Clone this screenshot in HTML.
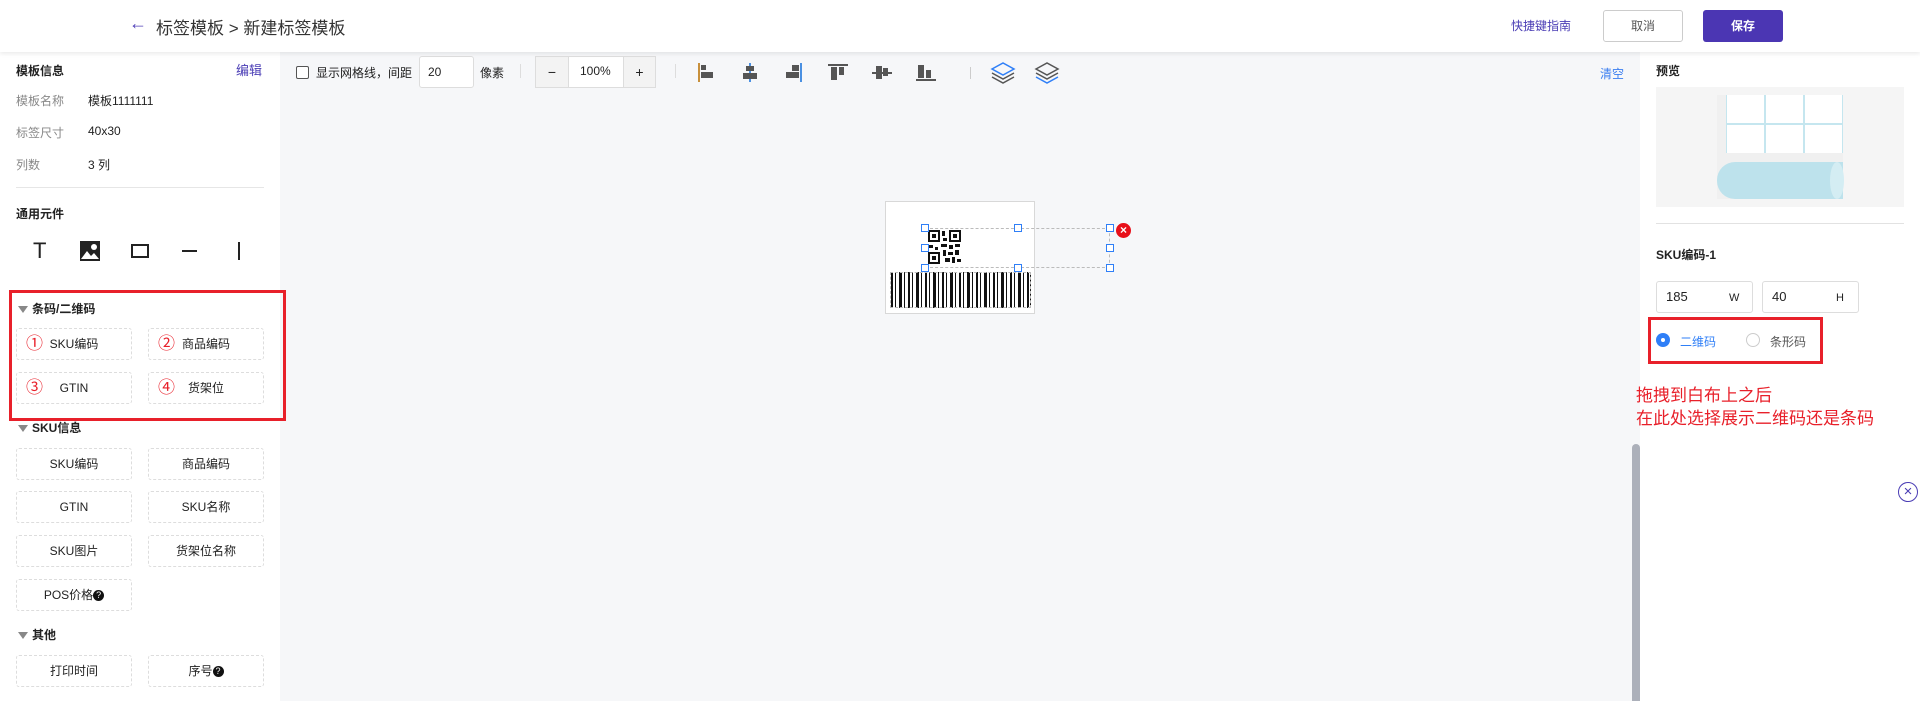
<!DOCTYPE html>
<html><head><meta charset="utf-8"><style>
*{margin:0;padding:0;box-sizing:border-box}
body{width:1920px;height:701px;overflow:hidden;background:#f6f7f9;font-family:"Liberation Sans","Noto Sans CJK SC",sans-serif;position:relative;color:#222}
.a{position:absolute}
.hdr{left:0;top:0;width:1920px;height:52px;background:#fff;box-shadow:0 2px 4px rgba(0,0,0,.08);z-index:2}
.lp{left:0;top:52px;width:280px;height:649px;background:#fff}
.rp{left:1640px;top:52px;width:280px;height:649px;background:#fff}
.t13{font-size:12px}
.b{font-weight:bold}
.btn{width:116px;height:32px;border:1px dashed #ddd;border-radius:3px;font-size:12px;text-align:center;line-height:30px;color:#222;background:#fff}
.btn .n{position:absolute;left:9px;top:0;color:#e8202a;font-size:17px;line-height:30px}
.tri{display:inline-block;width:0;height:0;border-left:5px solid transparent;border-right:5px solid transparent;border-top:7px solid #888;margin-right:4px;vertical-align:middle}
.h{width:8px;height:8px;border:1px solid #2f7ff7;background:#fff}
.q{display:inline-block;width:11px;height:11px;border-radius:50%;background:#111;color:#fff;font-size:9px;line-height:11px;text-align:center;vertical-align:middle}
</style></head><body>
<div class="a hdr">
 <div class="a" style="left:129px;top:13px;font-size:18px;color:#5040b8">&#8592;</div>
 <div class="a" style="left:156px;top:14px;font-size:17px;color:#333">标签模板 &gt; 新建标签模板</div>
 <div class="a" style="left:1511px;top:17px;font-size:12px;color:#4a3db5">快捷键指南</div>
 <div class="a" style="left:1603px;top:10px;width:80px;height:32px;border:1px solid #ccc;border-radius:3px;text-align:center;line-height:30px;font-size:12px;color:#555">取消</div>
 <div class="a" style="left:1703px;top:10px;width:80px;height:32px;background:#4b36b3;border-radius:3px;text-align:center;line-height:32px;font-size:12px;color:#fff;font-weight:bold">保存</div>
</div>
<div class="a lp">
 <div class="a t13 b" style="left:16px;top:10px">模板信息</div>
 <div class="a" style="left:236px;top:8px;font-size:13px;color:#4a3db5">编辑</div>
 <div class="a t13" style="left:16px;top:40px;color:#888">模板名称</div><div class="a t13" style="left:88px;top:40px">模板1111111</div>
 <div class="a t13" style="left:16px;top:72px;color:#888">标签尺寸</div><div class="a t13" style="left:88px;top:72px">40x30</div>
 <div class="a t13" style="left:16px;top:104px;color:#888">列数</div><div class="a t13" style="left:88px;top:104px">3 列</div>
 <div class="a" style="left:16px;top:135px;width:248px;height:1px;background:#e6e6e6"></div>
 <div class="a t13 b" style="left:16px;top:153px">通用元件</div>
 <div class="a" style="left:33px;top:188px;font-size:22px;line-height:22px;color:#222">T</div>
 <svg class="a" style="left:80px;top:189px" width="20" height="20"><rect width="20" height="20" fill="#222"/><circle cx="14" cy="6" r="3" fill="#fff"/><path d="M1 18 L7 10 L11 15 L14 12 L19 18Z" fill="#fff"/></svg>
 <div class="a" style="left:131px;top:192px;width:18px;height:14px;border:2px solid #222"></div>
 <div class="a" style="left:182px;top:198px;width:15px;height:2px;background:#222"></div>
 <div class="a" style="left:238px;top:190px;width:2px;height:18px;background:#222"></div>
 <div class="a" style="left:16px;top:238px;width:248px;height:1px;background:#e6e6e6"></div>
 <div class="a t13 b" style="left:18px;top:248px"><span class="tri"></span>条码/二维码</div>
 <div class="a btn" style="left:16px;top:276px"><span class="n">①</span>SKU编码</div>
 <div class="a btn" style="left:148px;top:276px"><span class="n">②</span>商品编码</div>
 <div class="a btn" style="left:16px;top:320px"><span class="n">③</span>GTIN</div>
 <div class="a btn" style="left:148px;top:320px"><span class="n">④</span>货架位</div>
 <div class="a t13 b" style="left:18px;top:367px"><span class="tri"></span>SKU信息</div>
 <div class="a btn" style="left:16px;top:396px">SKU编码</div>
 <div class="a btn" style="left:148px;top:396px">商品编码</div>
 <div class="a btn" style="left:16px;top:439px">GTIN</div>
 <div class="a btn" style="left:148px;top:439px">SKU名称</div>
 <div class="a btn" style="left:16px;top:483px">SKU图片</div>
 <div class="a btn" style="left:148px;top:483px">货架位名称</div>
 <div class="a btn" style="left:16px;top:527px">POS价格<span class="q">?</span></div>
 <div class="a t13 b" style="left:18px;top:574px"><span class="tri"></span>其他</div>
 <div class="a btn" style="left:16px;top:603px">打印时间</div>
 <div class="a btn" style="left:148px;top:603px">序号<span class="q">?</span></div>
</div>
<div class="a" style="left:9px;top:290px;width:277px;height:131px;border:3px solid #e8202a"></div>
<!-- toolbar -->
<div class="a" style="left:296px;top:66px;width:13px;height:13px;border:1px solid #555;border-radius:2px;background:#fff"></div>
<div class="a t13" style="left:316px;top:64px">显示网格线，间距</div>
<div class="a" style="left:419px;top:56px;width:55px;height:32px;border:1px solid #ddd;border-radius:3px;background:#fff;font-size:12px;line-height:30px;padding-left:8px">20</div>
<div class="a t13" style="left:480px;top:64px">像素</div>
<div class="a" style="left:520px;top:64px;width:1px;height:14px;background:#ddd"></div>
<div class="a" style="left:535px;top:56px;width:121px;height:32px;border:1px solid #ddd;border-radius:3px;background:#fff"></div>
<div class="a" style="left:535px;top:56px;width:34px;height:32px;background:#f3f3f3;border:1px solid #ddd;text-align:center;line-height:30px;font-size:14px">−</div>
<div class="a" style="left:623px;top:56px;width:33px;height:32px;background:#f3f3f3;border:1px solid #ddd;text-align:center;line-height:30px;font-size:14px">+</div>
<div class="a t13" style="left:580px;top:64px">100%</div>
<div class="a" style="left:675px;top:64px;width:1px;height:14px;background:#ddd"></div>
<svg class="a" style="left:680px;top:52px" width="400" height="40">
 <g fill="#555"><rect x="18" y="11" width="2" height="19" fill="#c8903c"/><rect x="21" y="13" width="5" height="5"/><rect x="21" y="20" width="12" height="6"/>
 <rect x="69" y="11" width="2" height="19" fill="#4a90e2"/><rect x="66" y="14" width="8" height="5"/><rect x="63" y="21" width="14" height="6"/>
 <rect x="120" y="11" width="2" height="19" fill="#4a90e2"/><rect x="112" y="13" width="7" height="6"/><rect x="106" y="20" width="13" height="6"/>
 <rect x="148" y="12" width="20" height="2"/><rect x="151" y="15" width="6" height="13"/><rect x="159" y="15" width="5" height="8"/>
 <rect x="192" y="20" width="20" height="2"/><rect x="196" y="14" width="6" height="13"/><rect x="203" y="16" width="5" height="8"/>
 <rect x="236" y="27" width="20" height="2"/><rect x="238" y="13" width="6" height="13"/><rect x="246" y="18" width="5" height="8"/>
 <rect x="290" y="15" width="1" height="12" fill="#ccc"/></g>
 <g fill="none" stroke-width="1.5"><path d="M312 17 L323 11 L334 17 L323 23Z" stroke="#2f7ff7"/><path d="M312 21 L323 27 L334 21" stroke="#555"/><path d="M312 25 L323 31 L334 25" stroke="#555"/>
 <path d="M356 17 L367 11 L378 17 L367 23Z" stroke="#555"/><path d="M356 21 L367 27 L378 21" stroke="#555"/><path d="M356 25 L367 31 L378 25" stroke="#2f7ff7"/></g>
</svg>
<div class="a t13" style="left:1600px;top:65px;color:#3b7ef0">清空</div>
<!-- canvas label -->
<div class="a" style="left:885px;top:201px;width:150px;height:113px;background:#fff;border:1px solid #d8d8d8"></div>
<div class="a" style="left:925px;top:228px;width:185px;height:40px;border:1px dashed #bbb;border-left:none"></div>
<svg class="a" style="left:925px;top:228px" width="40" height="40"><g fill="#111">
<rect x="3" y="2" width="12" height="12"/><rect x="5" y="4" width="8" height="8" fill="#fff"/><rect x="7" y="6" width="4" height="4"/>
<rect x="24" y="2" width="12" height="12"/><rect x="26" y="4" width="8" height="8" fill="#fff"/><rect x="28" y="6" width="4" height="4"/>
<rect x="3" y="24" width="12" height="12"/><rect x="5" y="26" width="8" height="8" fill="#fff"/><rect x="7" y="28" width="4" height="4"/>
<rect x="17" y="3" width="3" height="5"/><rect x="18" y="10" width="4" height="3"/><rect x="16" y="16" width="6" height="3"/><rect x="24" y="17" width="4" height="4"/><rect x="30" y="16" width="5" height="3"/><rect x="18" y="22" width="3" height="6"/><rect x="23" y="24" width="5" height="3"/><rect x="30" y="22" width="4" height="5"/><rect x="20" y="30" width="5" height="4"/><rect x="27" y="29" width="3" height="6"/><rect x="32" y="31" width="4" height="3"/><rect x="4" y="17" width="4" height="3"/><rect x="10" y="19" width="3" height="3"/></g></svg>
<div class="a" style="left:890px;top:272px;width:141px;height:36px;border:1px dashed #bbb;background:repeating-linear-gradient(90deg,#111 0 2px,#fff 2px 4px,#111 4px 5px,#fff 5px 8px,#111 8px 11px,#fff 11px 13px,#111 13px 14px,#fff 14px 17px)"></div>
<div class="a h" style="left:921px;top:224px"></div><div class="a h" style="left:1014px;top:224px"></div><div class="a h" style="left:1106px;top:224px"></div>
<div class="a h" style="left:921px;top:244px"></div><div class="a h" style="left:1106px;top:244px"></div>
<div class="a h" style="left:921px;top:264px"></div><div class="a h" style="left:1014px;top:264px"></div><div class="a h" style="left:1106px;top:264px"></div>
<div class="a" style="left:1116px;top:223px;width:15px;height:15px;border-radius:50%;background:#e8101a;color:#fff;font-size:12px;line-height:15px;text-align:center;font-weight:bold">×</div>
<div class="a" style="left:1632px;top:444px;width:8px;height:257px;background:#acb0ba;border-radius:4px 4px 0 0"></div>
<!-- right panel -->
<div class="a rp">
 <div class="a t13 b" style="left:16px;top:10px">预览</div>
 <div class="a" style="left:16px;top:35px;width:248px;height:120px;background:#f5f5f5">
  <div class="a" style="left:61px;top:8px;width:126px;height:104px;background:#f0f0f0"></div>
  <div class="a" style="left:70px;top:8px;width:117px;height:58px;background:#c5e6ef"></div>
  <div class="a" style="left:71px;top:8px;width:37px;height:28px;background:#fff"></div><div class="a" style="left:110px;top:8px;width:37px;height:28px;background:#fff"></div><div class="a" style="left:149px;top:8px;width:37px;height:28px;background:#fff"></div>
  <div class="a" style="left:71px;top:38px;width:37px;height:28px;background:#fff"></div><div class="a" style="left:110px;top:38px;width:37px;height:28px;background:#fff"></div><div class="a" style="left:149px;top:38px;width:37px;height:28px;background:#fff"></div>
  <div class="a" style="left:61px;top:75px;width:126px;height:37px;background:#bde2ec;border-radius:18px 0 0 18px"></div>
  <div class="a" style="left:174px;top:75px;width:14px;height:37px;background:#d4edf3;border-radius:50%"></div>
 </div>
 <div class="a" style="left:16px;top:171px;width:248px;height:1px;background:#e2e2e2"></div>
 <div class="a t13 b" style="left:16px;top:194px">SKU编码-1</div>
 <div class="a" style="left:16px;top:229px;width:97px;height:32px;border:1px solid #ddd;border-radius:3px;font-size:13px;line-height:30px;padding-left:9px">185<span class="a" style="left:72px;top:1px;font-size:11px">W</span></div>
 <div class="a" style="left:122px;top:229px;width:97px;height:32px;border:1px solid #ddd;border-radius:3px;font-size:13px;line-height:30px;padding-left:9px">40<span class="a" style="left:73px;top:1px;font-size:11px">H</span></div>
 <div class="a" style="left:16px;top:281px;width:14px;height:14px;border-radius:50%;background:#2f7ff7"></div><div class="a" style="left:21px;top:286px;width:4px;height:4px;border-radius:50%;background:#fff"></div>
 <div class="a t13" style="left:40px;top:281px;color:#2f7ff7">二维码</div>
 <div class="a" style="left:106px;top:281px;width:14px;height:14px;border-radius:50%;border:1px solid #ccc"></div>
 <div class="a t13" style="left:130px;top:281px;color:#555">条形码</div>
</div>
<div class="a" style="left:1648px;top:317px;width:175px;height:47px;border:3px solid #e8202a"></div>
<div class="a" style="left:1636px;top:384px;font-size:17px;line-height:23px;color:#e8202a">拖拽到白布上之后<br>在此处选择展示二维码还是条码</div>
<div class="a" style="left:1898px;top:482px;width:20px;height:20px;border:1.5px solid #4a3db5;border-radius:50%;color:#4a3db5;text-align:center;line-height:17px;font-size:15px">×</div>
</body></html>
